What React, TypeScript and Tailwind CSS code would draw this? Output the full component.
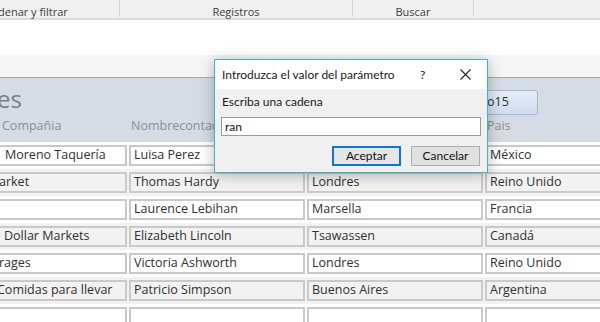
import React from "react";

const rows = [
  { c1: "Moreno Taquería", o1: "ml-[2px]", c2: "Luisa Perez", c3: "", c4: "México" },
  { c1: "arket", o1: "-ml-[4px]", c2: "Thomas Hardy", c3: "Londres", c4: "Reino Unido" },
  { c1: "", o1: "", c2: "Laurence Lebihan", c3: "Marsella", c4: "Francia" },
  { c1: "Dollar Markets", o1: "ml-[1px]", c2: "Elizabeth Lincoln", c3: "Tsawassen", c4: "Canadá" },
  { c1: "rages", o1: "-ml-[4px]", c2: "Victoria Ashworth", c3: "Londres", c4: "Reino Unido" },
  { c1: "Comidas para llevar", o1: "-ml-[6px]", c2: "Patricio Simpson", c3: "Buenos Aires", c4: "Argentina" },
  { c1: "", o1: "", c2: "", c3: "", c4: "" },
];

function Field({ text, className }: { text: string; className?: string }) {
  return (
    <div className="h-[21px] border-2 border-[#c9c9c9] flex items-center px-[3px] overflow-hidden whitespace-nowrap text-[12.5px] text-[#303030] leading-none">
      <span className={className}>{text}</span>
    </div>
  );
}

export default function App() {
  return (
    <div
      className="relative w-[600px] h-[322px] overflow-hidden bg-white"
      style={{ fontFamily: '"Open Sans", "Noto Sans", sans-serif' }}
    >
      {/* ribbon group labels */}
      <div className="h-[20px] bg-[#f0f0f0] border-b-2 border-[#dcdcdc] flex text-[11px] text-[#3c3c3c] leading-none">
        <div className="w-[122px] shrink-0 h-[17px] flex items-end -ml-[2px] border-r border-[#d6d6d6]">denar y filtrar</div>
        <div className="w-[233px] shrink-0 h-[17px] flex items-end justify-center border-r border-[#d6d6d6]">Registros</div>
        <div className="w-[121px] shrink-0 h-[17px] flex items-end justify-center border-r border-[#d6d6d6]">Buscar</div>
      </div>
      <div className="h-[35px] bg-white" />
      <div className="h-[22px] bg-[#f6f6f6]" />

      {/* form header */}
      <div className="h-[65px] bg-[#d6dce6] border-t border-[#a8a8a8] flex flex-col">
        <div className="h-[42px] flex items-center justify-between pr-[62px]">
          <span className="text-[24px] text-[#7c7c7c] -ml-[3px] leading-none">es</span>
          <div className="w-[56px] h-[25px] mt-[6px] rounded-[3px] border border-[#a6b8d8] bg-gradient-to-b from-[#e6edf8] to-[#cfdcf0] flex items-center pl-[4px] text-[12.5px] text-[#303030]">
            o15
          </div>
        </div>
        <div className="flex gap-[2px] -ml-[2px] text-[12.5px] text-[#8e8e8e] leading-none">
          <div className="w-[129px] shrink-0 pl-[4px]">Compañia</div>
          <div className="w-[176px] shrink-0 pl-[2px]">Nombrecontacto</div>
          <div className="w-[176px] shrink-0" />
          <div className="w-[130px] shrink-0 pl-[2px]">Pais</div>
        </div>
      </div>

      {/* detail rows */}
      <div className="flex flex-col">
        {rows.map((r, i) => (
          <div
            key={i}
            className={`h-[27px] flex items-center gap-[2px] -ml-[2px] ${i % 2 === 1 ? "bg-[#f2f2f2]" : "bg-white"}`}
          >
            <div className="w-[129px] shrink-0"><Field text={r.c1} className={r.o1} /></div>
            <div className="w-[176px] shrink-0"><Field text={r.c2} /></div>
            <div className="w-[176px] shrink-0"><Field text={r.c3} /></div>
            <div className="w-[130px] shrink-0"><Field text={r.c4} /></div>
          </div>
        ))}
      </div>

      {/* parameter dialog */}
      <div
        className="absolute left-[214px] top-[59px] w-[274px] h-[114px] border border-[#3cb4c2] bg-[#f0f0f0] flex flex-col shadow-[0_2px_14px_rgba(0,0,0,0.28)]"
        style={{ fontFamily: 'Lato, "Noto Sans", sans-serif' }}
      >
        <div className="h-[29px] shrink-0 bg-white flex items-center pl-[7px] text-[12px] text-[#1a1a1a] whitespace-nowrap">
          <span className="flex-1">Introduzca el valor del parámetro</span>
          <span className="w-[10px] text-[12px] mr-[30px]">?</span>
          <svg width="11" height="11" viewBox="0 0 11 11" className="mr-[16px]">
            <path d="M0.5 0.5L10.5 10.5M10.5 0.5L0.5 10.5" stroke="#222" strokeWidth="1.1" />
          </svg>
        </div>
        <div className="flex flex-col px-[6px] pt-[6px]">
          <div className="text-[12px] text-[#1a1a1a] leading-none pl-[1px] h-[14px] flex items-center">Escriba una cadena</div>
          <div className="mt-[8px] h-[19px] bg-white border border-[#9a9a9a] flex items-center pl-[3px] text-[12px] text-[#111] leading-none">
            ran
          </div>
          <div className="mt-[10px] flex justify-end gap-[10px] pr-[1px]">
            <button className="w-[69px] h-[20px] bg-[#e5e5e5] border-2 border-[#0a77d6] text-[12px] text-[#111] leading-none">
              Aceptar
            </button>
            <button className="w-[69px] h-[20px] bg-[#e1e1e1] border border-[#adadad] text-[12px] text-[#111] leading-none">
              Cancelar
            </button>
          </div>
        </div>
      </div>
    </div>
  );
}
